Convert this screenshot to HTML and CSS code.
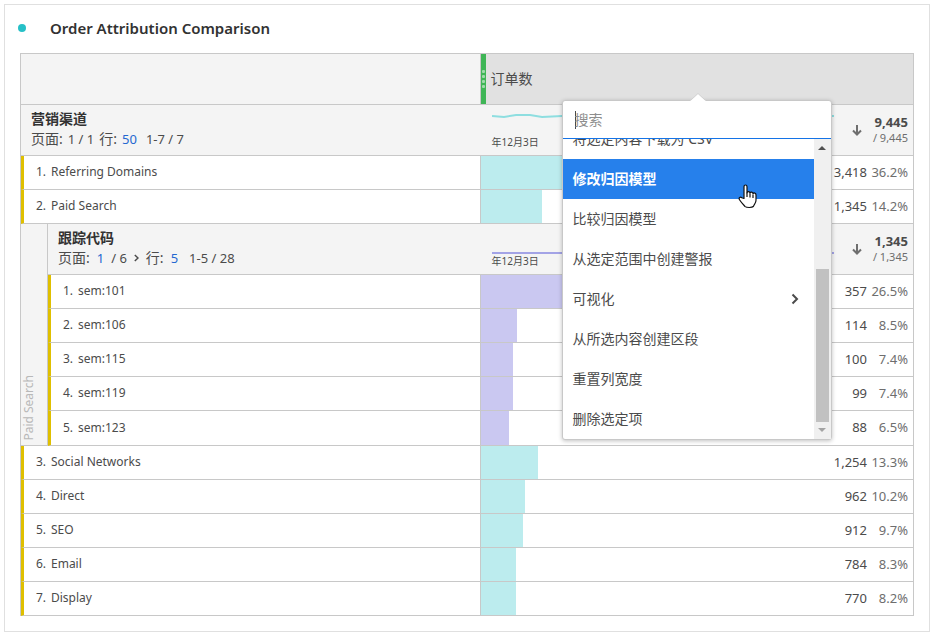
FILE: index.html
```html
<!DOCTYPE html>
<html lang="zh-CN">
<head>
<meta charset="utf-8">
<title>Order Attribution Comparison</title>
<link rel="stylesheet" href="styles.css">
</head>
<body>
<main class="panel">
  <header class="panel-head">
    <span class="dot"></span>
    <h1>Order Attribution Comparison</h1>
  </header>

  <table class="report">
    <colgroup><col class="col-gutter"><col class="col-name"><col></colgroup>
    <thead>
      <tr class="top-row">
        <td class="corner" colspan="2"></td>
        <th class="metric-head" scope="col">
          <div class="metric-title">
            <span class="handle"><i></i><i></i><i></i><i></i></span>
            <span>订单数</span>
          </div>
          <div class="menu">
            <svg class="menu-tip" width="16" height="8" viewBox="0 0 16 8"><path d="M0 8L8 .5 16 8z" fill="#fff"/><path d="M.5 7.500L8 .5l7.500 7" fill="none" stroke="#cfcfcf"/></svg>
            <input class="menu-search" type="text" placeholder="搜索" aria-label="搜索">
            <div class="menu-body">
              <div class="menu-list">
                <button type="button">将选定内容下载为 CSV</button>
                <button type="button" class="active">修改归因模型</button>
                <button type="button">比较归因模型</button>
                <button type="button">从选定范围中创建警报</button>
                <button type="button">可视化<svg width="8" height="12" viewBox="0 0 8 12"><path d="M1.500 1.500L6 6l-4.500 4.500" fill="none" stroke="#4b4b4b" stroke-width="2"/></svg></button>
                <button type="button">从所选内容创建区段</button>
                <button type="button">重置列宽度</button>
                <button type="button">删除选定项</button>
              </div>
              <div class="scroll">
                <svg width="8" height="4" viewBox="0 0 8 4"><path d="M0 4L4 0l4 4z" fill="#505050"/></svg>
                <span class="thumb"></span>
                <svg width="8" height="4" viewBox="0 0 8 4"><path d="M0 0l4 4 4-4z" fill="#a3a3a3"/></svg>
              </div>
            </div>
            <svg class="pointer" width="19" height="25" viewBox="0 0 19 25"><path d="M6 14.500V2.800C6 .4 9 .4 9 2.800v6c.4-1.600 2.800-1.500 3 .3.600-1.500 2.900-1.200 3 .6.700-1.200 3-.9 3 1.100v5.500c0 1.500-.5 2.700-1.500 4-.6.900-.8 1.500-1.200 2.200-1.200 1.300-6.600 1.300-8.100.1-1.800-2-4-4.200-5.700-6.900-1.200-2 .9-3.200 2.300-2z" fill="#fff" stroke="#111" stroke-width="1.200" stroke-linejoin="round"/><path d="M9 8.500v4.500M12 9.500v4M15 10.500v3.500" fill="none" stroke="#111" stroke-width="1.200"/></svg>
          </div>
        </th>
      </tr>
    </thead>
    <tbody>
      <tr class="group">
        <th colspan="2" scope="rowgroup">
          <div class="group-name">营销渠道</div>
          <div class="paging"><span class="word">页面:</span><span>1 / 1</span><span class="word">行:</span><a href="#">50</a><span class="range">1-7 / 7</span></div>
        </th>
        <td>
          <div class="summary">
            <div class="trend">
              <svg height="24" viewBox="0 0 342 24" preserveAspectRatio="none"><path d="M0 7l12 1 12-2h14l12 2 20-1h272" fill="none" stroke="#8edee0" stroke-width="2"/></svg>
              <span>年12月3日</span>
            </div>
            <svg class="sort" width="10" height="11" viewBox="0 0 10 11"><path d="M5 0v9M1 5.500l4 4 4-4" fill="none" stroke="#6e6e6e" stroke-width="2"/></svg>
            <div class="totals"><b>9,445</b><span>/ 9,445</span></div>
          </div>
        </td>
      </tr>
      <tr class="item"><th colspan="2" scope="row"><div class="label"><span>1.</span>Referring Domains</div></th><td><div class="metric"><span class="bar" style="width:36.2%"></span><div class="values"><span>3,418</span><span>36.2%</span></div></div></td></tr>
      <tr class="item"><th colspan="2" scope="row"><div class="label"><span>2.</span>Paid Search</div></th><td><div class="metric"><span class="bar" style="width:14.2%"></span><div class="values"><span>1,345</span><span>14.2%</span></div></div></td></tr>
      <tr class="group sub">
        <td class="gutter" rowspan="6"><span>Paid Search</span></td>
        <th scope="rowgroup">
          <div class="group-name">跟踪代码</div>
          <div class="paging sub-paging"><span class="word">页面:</span><a href="#">1</a><span>/ 6</span><svg width="5" height="8" viewBox="0 0 5 8"><path d="M.8 1L4 4 .8 7" fill="none" stroke="#4b4b4b" stroke-width="1.500"/></svg><span class="word">行:</span><a href="#">5</a><span class="range">1-5 / 28</span></div>
        </th>
        <td>
          <div class="summary">
            <div class="trend low">
              <svg height="8" viewBox="0 0 342 8" preserveAspectRatio="none"><path d="M0 5h342" fill="none" stroke="#a3a3e6" stroke-width="2"/></svg>
              <span>年12月3日</span>
            </div>
            <svg class="sort" width="10" height="11" viewBox="0 0 10 11"><path d="M5 0v9M1 5.500l4 4 4-4" fill="none" stroke="#6e6e6e" stroke-width="2"/></svg>
            <div class="totals"><b>1,345</b><span>/ 1,345</span></div>
          </div>
        </td>
      </tr>
      <tr class="item sub"><th scope="row"><div class="label"><span>1.</span>sem:101</div></th><td><div class="metric"><span class="bar" style="width:26.5%"></span><div class="values"><span>357</span><span>26.5%</span></div></div></td></tr>
      <tr class="item sub"><th scope="row"><div class="label"><span>2.</span>sem:106</div></th><td><div class="metric"><span class="bar" style="width:8.5%"></span><div class="values"><span>114</span><span>8.5%</span></div></div></td></tr>
      <tr class="item sub"><th scope="row"><div class="label"><span>3.</span>sem:115</div></th><td><div class="metric"><span class="bar" style="width:7.4%"></span><div class="values"><span>100</span><span>7.4%</span></div></div></td></tr>
      <tr class="item sub"><th scope="row"><div class="label"><span>4.</span>sem:119</div></th><td><div class="metric"><span class="bar" style="width:7.4%"></span><div class="values"><span>99</span><span>7.4%</span></div></div></td></tr>
      <tr class="item sub last"><th scope="row"><div class="label"><span>5.</span>sem:123</div></th><td><div class="metric"><span class="bar" style="width:6.5%"></span><div class="values"><span>88</span><span>6.5%</span></div></div></td></tr>
      <tr class="item"><th colspan="2" scope="row"><div class="label"><span>3.</span>Social Networks</div></th><td><div class="metric"><span class="bar" style="width:13.3%"></span><div class="values"><span>1,254</span><span>13.3%</span></div></div></td></tr>
      <tr class="item"><th colspan="2" scope="row"><div class="label"><span>4.</span>Direct</div></th><td><div class="metric"><span class="bar" style="width:10.2%"></span><div class="values"><span>962</span><span>10.2%</span></div></div></td></tr>
      <tr class="item"><th colspan="2" scope="row"><div class="label"><span>5.</span>SEO</div></th><td><div class="metric"><span class="bar" style="width:9.7%"></span><div class="values"><span>912</span><span>9.7%</span></div></div></td></tr>
      <tr class="item"><th colspan="2" scope="row"><div class="label"><span>6.</span>Email</div></th><td><div class="metric"><span class="bar" style="width:8.3%"></span><div class="values"><span>784</span><span>8.3%</span></div></div></td></tr>
      <tr class="item"><th colspan="2" scope="row"><div class="label"><span>7.</span>Display</div></th><td><div class="metric"><span class="bar" style="width:8.2%"></span><div class="values"><span>770</span><span>8.2%</span></div></div></td></tr>
    </tbody>
  </table>
</main>
</body>
</html>
```

FILE: styles.css
```css
* { box-sizing: border-box; }

body {
  margin: 4px;
  background: #fff;
  color: #4b4b4b;
  font: 13px/18px "Noto Sans", "Noto Sans CJK SC", sans-serif;
}

button, input { font: inherit; color: inherit; }
a { color: #2468d0; text-decoration: none; }
svg { display: block; flex: none; }

.panel {
  border: 1px solid #e0e0e0;
  padding: 0 15px 15px;
}

.panel-head {
  display: flex;
  align-items: center;
  height: 48px;
  gap: 24px;
  margin-left: -2px;
  padding-bottom: 3px;
}

.dot {
  width: 8px;
  height: 8px;
  border-radius: 50%;
  background: #26c0c7;
}

h1 {
  margin: 0;
  font-size: 15px;
  line-height: 20px;
  font-weight: 600;
  color: #323232;
}

/* Report table */
.report {
  width: 100%;
  table-layout: fixed;
  border-collapse: separate;
  border-spacing: 0;
  border: solid #c8c8c8;
  border-width: 1px 1px 0;
}

.col-gutter { width: 27px; }
.col-name { width: 48.5%; }

.report th, .report td {
  padding: 0;
  border-bottom: 1px solid #c8c8c8;
  font-weight: 400;
  text-align: left;
}

.corner {
  height: 51px;
  background: #f4f4f4;
}

.report .corner, .report .item th { border-right: 1px solid #c8c8c8; }

.metric-head {
  position: relative;
  background: #e1e1e1;
}

.metric-title {
  display: flex;
  align-items: center;
  gap: 5px;
  height: 50px;
  font-size: 14px;
}

.handle {
  display: flex;
  flex-direction: column;
  align-items: center;
  justify-content: center;
  gap: 2px;
  width: 5px;
  height: 100%;
  background: #3fb556;
}

.handle i {
  width: 3px;
  height: 3px;
  border-radius: 1px;
  background: #a0daab;
}

/* Group rows */
.group th, .group td {
  height: 51px;
  background: #f4f4f4;
}

.report .group th { padding: 0 0 3px 10px; }

.group-name {
  font-size: 14px;
  line-height: 20px;
  font-weight: 700;
  color: #323232;
}

.paging {
  display: flex;
  align-items: center;
  gap: 5px;
  line-height: 20px;
}

.paging .word { font-size: 14px; }
.sub-paging { gap: 7px; }
.range { margin-left: 4px; }

.summary {
  display: flex;
  align-items: center;
  height: 50px;
  padding: 0 5px 0 11px;
}

.trend {
  flex: 1;
  height: 50px;
  padding-top: 4px;
  font-size: 10px;
  line-height: 18px;
}

.trend svg { width: 100%; }
.trend.low { padding-top: 24px; }
.trend.low span {
  display: block;
  margin-right: 2px;
  border-right: 1px solid #8ecbf0;
  line-height: 10px;
}
.sort { margin: 0 11px 0 18px; }
.totals { text-align: right; font-size: 11px; line-height: 15px; color: #6e6e6e; }
.totals b { display: block; font-size: 13px; color: #4b4b4b; }

.report .gutter {
  border-right: 1px solid #c8c8c8;
  vertical-align: bottom;
  color: #b8b8b8;
  font-size: 12px;
  line-height: 16px;
}

.gutter span {
  display: block;
  writing-mode: vertical-rl;
  transform: rotate(180deg);
  padding-top: 4px;
}

/* Item rows */
.report .item th { border-left: 3px solid #dfbf00; }

.label {
  display: flex;
  gap: 5px;
  padding-bottom: 1px;
  font-size: 12px;
}

.label span { width: 22px; text-align: right; }

.metric { display: grid; height: 33px; }
.last .metric { height: 34px; }
.bar, .values { grid-area: 1 / 1; }
.bar { background: #bcecee; }
.sub .bar { background: #cac8f1; }

.values {
  display: flex;
  align-items: center;
  justify-content: flex-end;
  padding: 0 5px 2px 0;
}

.values span + span { width: 41px; text-align: right; color: #6e6e6e; }

/* Column context menu */
.menu {
  position: absolute;
  z-index: 1;
  top: 46px;
  left: 81px;
  width: 270px;
  background: #fff;
  border: 1px solid #c8c8c8;
  border-radius: 3px;
  box-shadow: 0 1px 4px rgba(0, 0, 0, 0.25);
  font-size: 14px;
}

.menu-tip {
  position: absolute;
  top: -8px;
  left: 127px;
}

.menu-search {
  display: block;
  width: 100%;
  height: 38px;
  padding: 0 12px;
  border: 0;
  border-bottom: 1px solid #1473e6;
  background: linear-gradient(#4b4b4b, #4b4b4b) 12px 10px / 1px 18px no-repeat;
  outline: 0;
}

.menu-search::placeholder { color: #8e8e8e; opacity: 1; }

.menu-body { display: flex; height: 300px; }

.menu-list {
  display: flex;
  flex: 1;
  flex-direction: column;
  justify-content: flex-end;
  overflow: hidden;
}

.menu-list button {
  display: flex;
  flex: none;
  align-items: center;
  justify-content: space-between;
  height: 40px;
  padding: 0 15px 0 10px;
  border: 0;
  background: none;
}

.menu-list .active {
  background: #2680eb;
  color: #fff;
  font-weight: 700;
}

.scroll {
  display: flex;
  flex-direction: column;
  align-items: center;
  justify-content: flex-end;
  width: 17px;
  padding: 7px 0;
  background: #f0f0f0;
}

.scroll svg:first-child { margin-bottom: auto; }

.thumb {
  width: 13px;
  height: 153px;
  margin-bottom: 6px;
  background: #c1c1c1;
}

.pointer {
  position: absolute;
  top: 83px;
  left: 175px;
}
```
